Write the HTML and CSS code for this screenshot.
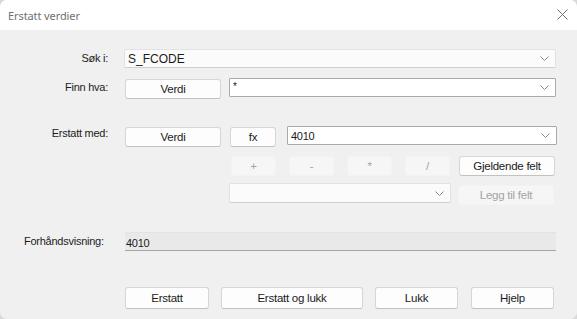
FILE: index.html
```html
<!DOCTYPE html>
<html lang="no">
  <head>
    <meta charset="UTF-8" />
    <link rel="stylesheet" href="styles.css">
  </head>
  <body>
    <div id="replace-window">
      <div class="titlebar">
        <span class="title">Erstatt verdier</span>
        <svg class="close-icon" width="11" height="11" viewBox="0 0 11 11">
          <path d="M0.5 0.5 L10.5 10.5 M10.5 0.5 L0.5 10.5" stroke="#6f6f6f" stroke-width="1" fill="none" />
        </svg>
      </div>

      <div class="dialog-body">
        <!-- search in -->
        <div class="row row-search">
          <label class="field-label">Søk i:</label>
          <div class="combo combo-flat combo-search">
            <span class="combo-text">S_FCODE</span>
            <svg class="chevron" width="9" height="5" viewBox="0 0 9 5"><path d="M0.5 0.5 L4.5 4.5 L8.5 0.5" stroke="#8a8a8a" fill="none" /></svg>
          </div>
        </div>

        <!-- find what -->
        <div class="row row-find">
          <label class="field-label">Finn hva:</label>
          <button class="btn btn-value" type="button">Verdi</button>
          <div class="combo combo-edit combo-find">
            <span class="combo-text">*</span>
            <svg class="chevron" width="9" height="5" viewBox="0 0 9 5"><path d="M0.5 0.5 L4.5 4.5 L8.5 0.5" stroke="#8a8a8a" fill="none" /></svg>
          </div>
        </div>

        <!-- replace with -->
        <div class="row row-replace">
          <label class="field-label">Erstatt med:</label>
          <button class="btn btn-value" type="button">Verdi</button>
          <button class="btn btn-fx" type="button">fx</button>
          <div class="combo combo-edit combo-replace">
            <span class="combo-text">4010</span>
            <svg class="chevron" width="9" height="5" viewBox="0 0 9 5"><path d="M0.5 0.5 L4.5 4.5 L8.5 0.5" stroke="#8a8a8a" fill="none" /></svg>
          </div>
        </div>

        <!-- operators -->
        <div class="row row-ops">
          <button class="btn btn-op btn-disabled" type="button">+</button>
          <button class="btn btn-op btn-disabled" type="button">-</button>
          <button class="btn btn-op btn-disabled" type="button">*</button>
          <button class="btn btn-op btn-disabled" type="button">/</button>
          <button class="btn btn-field" type="button">Gjeldende felt</button>
        </div>

        <!-- fields -->
        <div class="row row-fields">
          <div class="combo combo-flat combo-fields">
            <span class="combo-text"></span>
            <svg class="chevron" width="9" height="5" viewBox="0 0 9 5"><path d="M0.5 0.5 L4.5 4.5 L8.5 0.5" stroke="#8a8a8a" fill="none" /></svg>
          </div>
          <button class="btn btn-field btn-disabled btn-add" type="button">Legg til felt</button>
        </div>

        <!-- preview -->
        <div class="row row-preview">
          <label class="field-label preview-label">Forhåndsvisning:</label>
          <div class="preview-box">4010</div>
        </div>

        <!-- actions -->
        <div class="row row-actions">
          <button class="btn btn-action btn-replace" type="button">Erstatt</button>
          <button class="btn btn-action btn-replace-close" type="button">Erstatt og lukk</button>
          <button class="btn btn-action btn-close" type="button">Lukk</button>
          <button class="btn btn-action btn-help" type="button">Hjelp</button>
        </div>
      </div>
    </div>
  </body>
</html>
```

FILE: styles.css
```css
html,
body {
  margin: 0;
  height: 100%;
  background: #d9d9d9;
}

#replace-window {
  height: 319px;
  display: flex;
  flex-direction: column;
  border-radius: 7px;
  overflow: hidden;
  background: #f0f0f0;
  font-family: "Liberation Sans", Arial, sans-serif;
  font-size: 11px;
  letter-spacing: -0.25px;
  color: #1b1b1b;
}

.titlebar {
  height: 30px;
  flex: none;
  display: flex;
  align-items: center;
  justify-content: space-between;
  padding: 0 9px 0 8px;
  background: #ffffff;
}

.title {
  font-family: "Noto Sans", "Open Sans", sans-serif;
  font-size: 11px;
  letter-spacing: -0.1px;
  color: #707070;
}

.close-icon {
  margin-top: -2px;
}

.dialog-body {
  flex: 1;
  padding: 0 21px 0 0;
}

.row {
  display: flex;
  align-items: flex-start;
}

.field-label {
  width: 108px;
  flex: none;
  margin-right: 16px;
  text-align: right;
  line-height: 14px;
}

.row-search {
  margin-top: 19px;
  height: 19px;
}

.row-search .field-label {
  margin-top: 2px;
}

.row-find {
  margin-top: 10px;
  height: 21px;
}

.row-find .field-label {
  margin-top: 2px;
}

.row-replace {
  margin-top: 27px;
  height: 21px;
}

.row-replace .field-label {
  margin-top: 0;
}

.row-ops {
  margin-top: 9px;
  height: 20px;
  padding-left: 231px;
}

.row-fields {
  margin-top: 7px;
  height: 21px;
  padding-left: 229px;
}

.row-preview {
  margin-top: 28px;
  height: 20px;
}

.row-actions {
  margin-top: 35px;
  padding-left: 125px;
}

/* combo boxes */
.combo {
  box-sizing: border-box;
  height: 19px;
  display: flex;
  align-items: center;
  justify-content: space-between;
  padding: 0 6px 0 3px;
}

.combo-flat {
  background: #fbfbfb;
  border: 1px solid #e2e2e2;
  border-bottom-color: #cfcfcf;
  border-radius: 2px;
}

.combo-edit {
  background: #ffffff;
  border: 1px solid #a9a9a9;
  border-radius: 1px;
}

.combo-text {
  line-height: 14px;
}

.combo-search {
  flex: 1;
}

.combo-search .combo-text {
  font-size: 12px;
  letter-spacing: 0;
}

.combo-find {
  flex: 1;
  margin-left: 8px;
  margin-right: 0;
}

.combo-find .combo-text {
  align-self: flex-start;
  margin-top: 1px;
  font-size: 10px;
}

.combo-replace {
  flex: 1;
  margin-left: 11px;
  margin-right: -1px;
}

.combo-fields {
  width: 222px;
  height: 20px;
}

/* buttons */
.btn {
  box-sizing: border-box;
  height: 20px;
  padding: 0;
  font-family: "Liberation Sans", Arial, sans-serif;
  font-size: 11.5px;
  letter-spacing: -0.25px;
  color: #1b1b1b;
  background: #fdfdfd;
  border: 1px solid #d6d6d6;
  border-bottom-color: #c2c2c2;
  border-radius: 3px;
}

.btn-disabled {
  background: #f6f6f6;
  border-color: #f3f3f3;
  color: #a3a3a3;
}

.btn-value {
  width: 96px;
  margin: 1px 0 0 1px;
}

.btn-fx {
  width: 46px;
  margin: 1px 0 0 9px;
}

.btn-op {
  width: 45px;
  margin-right: 13px;
}

.btn-op:nth-child(4) {
  margin-right: 9px;
}

.btn-field {
  width: 96px;
}

.btn-add {
  margin: 2px 0 0 7px;
}

.preview-label {
  width: 78px;
  margin-left: 24px;
  margin-right: 23px;
  margin-top: 2px;
  text-align: left;
  white-space: nowrap;
}

.preview-box {
  flex: 1;
  box-sizing: border-box;
  height: 19px;
  padding: 3px 1px 0;
  background: #e9e9e9;
  border-top: 1px solid #e3e3e3;
  border-bottom: 1px solid #a4a4a4;
  line-height: 14px;
}

.btn-action {
  height: 22px;
}

.btn-replace {
  width: 84px;
}

.btn-replace-close {
  width: 142px;
  margin-left: 12px;
}

.btn-close {
  width: 83px;
  margin-left: 12px;
}

.btn-help {
  width: 83px;
  margin-left: 13px;
}
```
